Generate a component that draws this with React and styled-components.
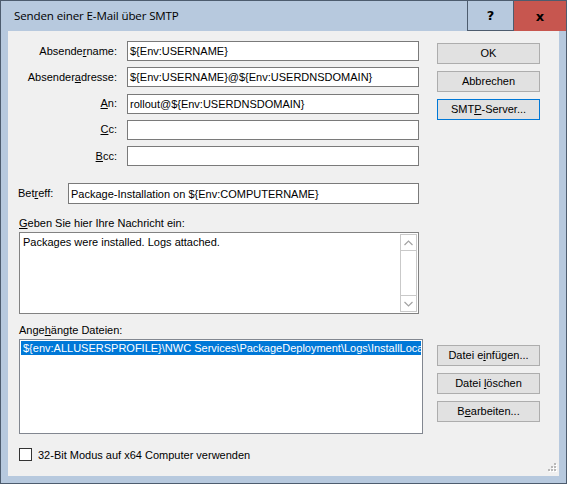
import styled, { createGlobalStyle } from 'styled-components';

const GlobalStyle = createGlobalStyle`
  html, body {
    margin: 0;
    padding: 0;
    background: #b7c9de;
  }
  * {
    box-sizing: border-box;
  }
`;

const Window = styled.div`
  width: 567px;
  height: 484px;
  border: 1px solid #4d5c6e;
  background: #b7c9de;
  display: flex;
  flex-direction: column;
  font-family: 'Liberation Sans', Arial, sans-serif;
  font-size: 11px;
  color: #000;
`;

const TitleBar = styled.div`
  height: 30px;
  display: flex;
  align-items: center;
  flex-shrink: 0;
`;

const Caption = styled.div`
  flex: 1;
  padding-left: 13px;
  font-family: 'Open Sans', 'Noto Sans', sans-serif;
  font-size: 11.6px;
  letter-spacing: -0.15px;
  padding-bottom: 1px;
`;

const CaptionButton = styled.div`
  height: 30px;
  width: ${(p) => p.$w}px;
  display: flex;
  align-items: center;
  justify-content: center;
  background: ${(p) => (p.$close ? '#c7564f' : 'transparent')};
  border: ${(p) => (p.$close ? 'none' : '1px solid #4d5c6e')};
  border-top: none;
  font-family: 'DejaVu Sans', sans-serif;
  font-weight: bold;
  font-size: 13px;
`;

const Client = styled.div`
  position: relative;
  flex: 1;
  margin: 0 7px 7px 7px;
  background: #f0f0f0;
  padding-top: 10px;
  display: flex;
  flex-direction: column;
`;

const TopSection = styled.div`
  display: flex;
`;

const FieldGrid = styled.div`
  display: grid;
  grid-template-columns: 109px 292px;
  grid-auto-rows: 20px;
  column-gap: 10px;
  row-gap: 6.3px;
`;

const Label = styled.label`
  display: flex;
  align-items: center;
  justify-content: ${(p) => (p.$right ? 'flex-end' : 'flex-start')};
  white-space: nowrap;
  line-height: 13px;
`;

const TextBox = styled.div`
  height: ${(p) => p.$h || 20}px;
  width: ${(p) => (p.$w ? `${p.$w}px` : 'auto')};
  background: #fff;
  border: 1px solid #7a7a7a;
  padding: 0 2px;
  display: flex;
  align-items: center;
  white-space: nowrap;
  overflow: hidden;
`;

const ButtonColumn = styled.div`
  display: flex;
  flex-direction: column;
  gap: 7px;
  margin-left: ${(p) => p.$ml}px;
  margin-top: ${(p) => p.$mt}px;
`;

const Button = styled.div`
  width: 103px;
  height: 21px;
  background: #e1e1e1;
  border: 1px solid ${(p) => (p.$focused ? '#0078d7' : '#adadad')};
  text-align: center;
  line-height: 19px;
  white-space: nowrap;
`;

const SubjectRow = styled.div`
  display: flex;
  align-items: center;
  margin-top: 17px;
  padding-left: 10px;
`;

const SubjectLabel = styled(Label)`
  width: 50px;
`;

const BlockLabel = styled.div`
  padding-left: 11px;
  line-height: 13px;
  margin-top: ${(p) => p.$mt}px;
  margin-bottom: 2px;
`;

const MessageBox = styled.div`
  margin-left: 11px;
  width: 400px;
  height: 82px;
  background: #fff;
  border: 1px solid #828282;
  display: flex;
`;

const MessageText = styled.div`
  flex: 1;
  padding: 3px 0 0 3px;
`;

const ScrollBar = styled.div`
  width: 17px;
  margin: 1px 1px 1px 0;
  border: 1px solid #c9c9c9;
  display: flex;
  flex-direction: column;
  justify-content: space-between;
`;

const ScrollArrow = styled.div`
  height: 16px;
  display: flex;
  align-items: center;
  justify-content: center;
  border-top: ${(p) => (p.$down ? '1px solid #c9c9c9' : 'none')};
  border-bottom: ${(p) => (p.$down ? 'none' : '1px solid #c9c9c9')};
`;

const FilesSection = styled.div`
  display: flex;
`;

const FilesColumn = styled.div`
  display: flex;
  flex-direction: column;
`;

const ListBox = styled.div`
  margin-left: 11px;
  width: 404px;
  height: 95px;
  background: #fff;
  border: 1px solid #828790;
  padding: 1px;
  overflow: hidden;
`;

const ListItem = styled.div`
  height: 14px;
  line-height: 14px;
  padding-left: 2px;
  white-space: nowrap;
  overflow: hidden;
  background: ${(p) => (p.$selected ? '#0078d7' : 'transparent')};
  color: ${(p) => (p.$selected ? '#fff' : '#000')};
`;

const CheckRow = styled.div`
  display: flex;
  align-items: center;
  gap: 6px;
  margin-top: 14px;
  padding-left: 11px;
`;

const CheckBox = styled.div`
  width: 13px;
  height: 13px;
  background: #fff;
  border: 1px solid #333;
`;

const SizeGrip = styled.svg`
  position: absolute;
  right: 2px;
  bottom: 3px;
`;

const Chevron = ({ down }) => (
  <svg width="9" height="6" viewBox="0 0 9 6">
    <path
      d={down ? 'M0.5 1 L4.5 5 L8.5 1' : 'M0.5 5 L4.5 1 L8.5 5'}
      fill="none"
      stroke="#a3a3a3"
      strokeWidth="1.2"
    />
  </svg>
);

// mnemonic letter
const K = styled.span`
  text-decoration: underline;
  text-underline-offset: 1px;
`;

const senderFields = [
  { label: <>Absende<K>r</K>name:</>, value: '${Env:USERNAME}' },
  { label: <>Absender<K>a</K>dresse:</>, value: '${Env:USERNAME}@${Env:USERDNSDOMAIN}' },
  { label: <><K>A</K>n:</>, value: 'rollout@${Env:USERDNSDOMAIN}' },
  { label: <><K>C</K>c:</>, value: '' },
  { label: <><K>B</K>cc:</>, value: '' },
];

const gripDots = [
  [9, 1],
  [6, 4], [9, 4],
  [3, 7], [6, 7], [9, 7],
];

export default function App() {
  return (
    <>
      <GlobalStyle />
      <Window>
        <TitleBar>
          <Caption>Senden einer E-Mail über SMTP</Caption>
          <CaptionButton $w={47}>?</CaptionButton>
          <CaptionButton $w={52} $close>
            x
          </CaptionButton>
        </TitleBar>

        <Client>
          <TopSection>
            <FieldGrid>
              {senderFields.map((f, i) => [
                <Label key={`l${i}`} $right>
                  {f.label}
                </Label>,
                <TextBox key={`t${i}`}>{f.value}</TextBox>,
              ])}
            </FieldGrid>
            <ButtonColumn $ml={18} $mt={2}>
              <Button>OK</Button>
              <Button>Abbrechen</Button>
              <Button $focused>
                SMT<K>P</K>-Server...
              </Button>
            </ButtonColumn>
          </TopSection>

          <SubjectRow>
            <SubjectLabel>
              Bet<K>r</K>eff:
            </SubjectLabel>
            <TextBox $w={351} $h={21}>
              <span>Package-Installation on {'${Env:COMPUTERNAME}'}</span>
            </TextBox>
          </SubjectRow>

          <BlockLabel $mt={13}>
            <K>G</K>eben Sie hier Ihre Nachricht ein:
          </BlockLabel>
          <MessageBox>
            <MessageText>Packages were installed. Logs attached.</MessageText>
            <ScrollBar>
              <ScrollArrow>
                <Chevron />
              </ScrollArrow>
              <ScrollArrow $down>
                <Chevron down />
              </ScrollArrow>
            </ScrollBar>
          </MessageBox>

          <FilesSection>
            <FilesColumn>
              <BlockLabel $mt={10}>
                Ange<K>h</K>ängte Dateien:
              </BlockLabel>
              <ListBox>
                <ListItem $selected>
                  {'${env:ALLUSERSPROFILE}\\NWC Services\\PackageDeployment\\Logs\\InstallLocal.log'}
                </ListItem>
              </ListBox>
            </FilesColumn>
            <ButtonColumn $ml={14} $mt={31}>
              <Button>
                Datei e<K>i</K>nfügen...
              </Button>
              <Button>
                Datei <K>l</K>öschen
              </Button>
              <Button>
                B<K>e</K>arbeiten...
              </Button>
            </ButtonColumn>
          </FilesSection>

          <CheckRow>
            <CheckBox />
            <span>32-Bit Modus auf x64 Computer verwenden</span>
          </CheckRow>

          <SizeGrip width="12" height="11" viewBox="0 0 12 11">
            {gripDots.map(([x, y]) => (
              <g key={`${x}-${y}`}>
                <rect x={x + 1} y={y + 1} width="2" height="2" fill="#fff" />
                <rect x={x} y={y} width="2" height="2" fill="#b8b8b8" />
              </g>
            ))}
          </SizeGrip>
        </Client>
      </Window>
    </>
  );
}
